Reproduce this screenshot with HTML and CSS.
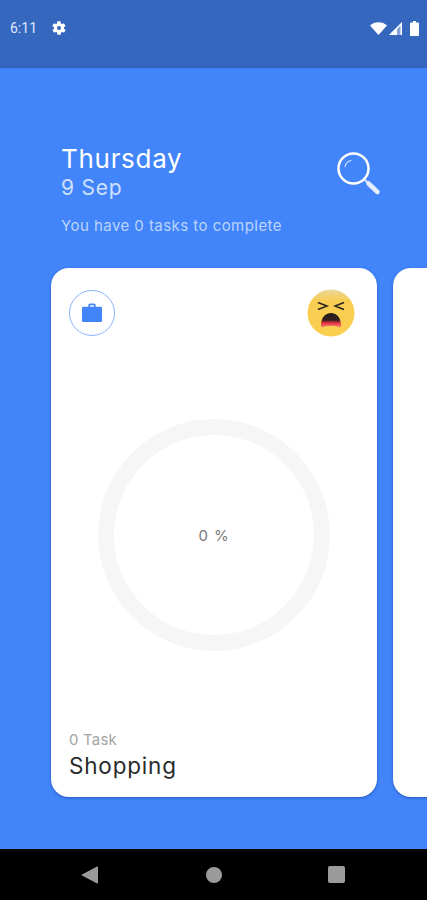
FILE: index.html
```html
<!DOCTYPE html>
<html lang="en">
<head>
  <meta charset="UTF-8" />
  <meta name="viewport" content="width=device-width, initial-scale=1.0" />
  <title>Tasks</title>
  <link rel="stylesheet" href="styles.css">
</head>
<body>
  <div class="status-bar">
    <div class="status-left">
      <span class="clock">6:11</span>
      <svg class="gear" width="16" height="16" viewBox="0 0 24 24"><path fill="#fff" d="M19.400 13c.1-.3.1-.7.1-1s0-.7-.1-1l2.100-1.600c.2-.2.2-.4.1-.6l-2-3.500c-.1-.2-.4-.3-.6-.2l-2.500 1c-.5-.4-1.100-.7-1.700-1l-.4-2.600c0-.3-.2-.5-.5-.5h-4c-.3 0-.5.2-.5.500l-.4 2.600c-.6.3-1.200.6-1.700 1l-2.500-1c-.2-.1-.5 0-.6.2l-2 3.500c-.1.2-.1.4.1.6L4.600 11c-.1.3-.1.700-.1 1s0 .7.1 1l-2.100 1.600c-.2.2-.2.4-.1.6l2 3.500c.1.2.4.3.6.2l2.500-1c.5.4 1.100.7 1.700 1l.4 2.600c0 .3.2.5.5.5h4c.3 0 .5-.2.5-.5l.4-2.600c.6-.3 1.200-.6 1.700-1l2.500 1c.2.1.5 0 .6-.2l2-3.500c.1-.2.1-.4-.1-.6L19.400 13zM12 15a3 3 0 1 1 0-6 3 3 0 0 1 0 6z"/></svg>
    </div>
    <div class="status-right">
      <svg width="17" height="13" viewBox="0 0 17 13"><path fill="#fff" d="M0 3.500C2.200 1.400 5.200.2 8.500.2s6.300 1.200 8.500 3.300L8.500 13z"/></svg>
      <svg width="13" height="13" viewBox="0 0 13 13"><path fill="#fff" opacity=".4" d="M13 0v13H0z"/><path fill="#fff" d="M8 5.500V13H0z"/><path fill="#fff" d="M13 0v13h-1.500V3.600L3 12l-1-.8z"/></svg>
      <svg class="battery" width="9" height="15" viewBox="0 0 9 15"><path fill="#fff" d="M3 0h3v1.500h2c.5 0 1 .5 1 1V14c0 .5-.5 1-1 1H1c-.5 0-1-.5-1-1V2.500c0-.5.5-1 1-1h2z"/></svg>
    </div>
  </div>

  <main class="main">
    <header class="header">
      <div class="heading">
        <h1 class="day">Thursday</h1>
        <div class="date">9 Sep</div>
        <p class="summary">You have 0 tasks to complete</p>
      </div>
      <svg class="search" width="46" height="46" viewBox="0 0 46 46">
        <circle cx="17.500" cy="17.500" r="15" fill="none" stroke="#fff" stroke-width="2.500"/>
        <path d="M9 15.500c.7-3 3-5.300 6-6" fill="none" stroke="#fff" stroke-opacity=".75" stroke-width="1.200" stroke-linecap="round"/>
        <path d="M28.500 28.500l3.500 3.500" stroke="#d5e3fb" stroke-width="2"/>
        <path d="M32.500 32.500l9 8.500" stroke="#e4edfd" stroke-width="4.500" stroke-linecap="round"/>
      </svg>
    </header>

    <div class="cards">
      <section class="card">
        <div class="card-top">
          <div class="cat-icon">
            <svg width="22" height="20" viewBox="0 0 24 22"><path fill="#4285fb" d="M8 4V2.500C8 1.400 8.900.5 10 .5h4c1.100 0 2 .9 2 2V4h5.500c.8 0 1.500.7 1.500 1.500v14c0 .8-.7 1.500-1.500 1.500h-19C1.700 21 1 20.300 1 19.500v-14C1 4.700 1.700 4 2.500 4zm2 0h4V2.500h-4z"/></svg>
          </div>
          <svg class="emoji" width="48" height="48" viewBox="0 0 48 48">
            <defs>
              <linearGradient id="face" x1="0" y1="0" x2="0" y2="1">
                <stop offset="0" stop-color="#e9d698"/>
                <stop offset=".25" stop-color="#f8cd52"/>
                <stop offset="1" stop-color="#fbcf4e"/>
              </linearGradient>
              <linearGradient id="mouth" x1="0" y1="0" x2="0" y2="1">
                <stop offset="0" stop-color="#26201f"/>
                <stop offset=".5" stop-color="#33201f"/>
                <stop offset=".7" stop-color="#e8303f"/>
                <stop offset="1" stop-color="#f0857b"/>
              </linearGradient>
            </defs>
            <circle cx="24" cy="24" r="23.500" fill="url(#face)"/>
            <path d="M11 13.500l9 3.500-9 3.500M37 13.500l-9 3.500 9 3.500" fill="none" stroke="#2b2420" stroke-width="1.500"/>
            <path d="M14 37c0-8 4-13 10-13s10 5 10 13c0 1-1 1.500-2 1-5-1.800-11-1.800-16 0-1 .5-2 0-2-1z" fill="url(#mouth)"/>
          </svg>
        </div>

        <div class="ring">
          <span class="percent">0 %</span>
        </div>

        <div class="card-bottom">
          <div class="count">0 Task</div>
          <div class="title">Shopping</div>
        </div>
      </section>
      <section class="card next"></section>
    </div>
  </main>

  <nav class="nav-bar">
    <svg width="18" height="18" viewBox="0 0 18 18"><path fill="#9b9b9b" d="M17 1v16c0 .5-.4.7-.8.4L1 9.500c-.4-.2-.4-.7 0-1L16.200.6c.4-.3.8 0 .8.400z"/></svg>
    <span class="nav-circle"></span>
    <span class="nav-square"></span>
  </nav>
</body>
</html>
```

FILE: styles.css
```css
* {
  box-sizing: border-box;
}

body {
  margin: 0;
  width: 427px;
  height: 900px;
  overflow: hidden;
  display: flex;
  flex-direction: column;
  font-family: Inter, "Open Sans", sans-serif;
  background: #4285fb;
}

.status-bar {
  height: 68px;
  flex: none;
  padding: 18px 8px 0 10px;
  display: flex;
  justify-content: space-between;
  align-items: flex-start;
  background: #3567bf;
  box-shadow: inset 0 -2px 1px -1px #3161b5;
}

.status-left {
  display: flex;
  align-items: center;
  gap: 14px;
  height: 20px;
}

.clock {
  font-family: Roboto, sans-serif;
  font-size: 14px;
  color: #dfe8f8;
}

.status-right {
  display: flex;
  align-items: center;
  gap: 2px;
  height: 20px;
}

.battery {
  margin-left: 6px;
}

.main {
  flex: 1;
  overflow: hidden;
}

.header {
  height: 200px;
  padding: 75px 45px 0 61px;
  display: flex;
  justify-content: space-between;
  align-items: flex-start;
}

.day {
  margin: 0;
  font-size: 26px;
  line-height: 32px;
  font-weight: 400;
  color: #fff;
  letter-spacing: 0.7px;
}

.date {
  font-size: 21px;
  line-height: 26px;
  color: #cfe0fd;
  letter-spacing: 0.8px;
}

.summary {
  margin: 15px 0 0;
  font-size: 15px;
  line-height: 20px;
  color: #bcd4fd;
  letter-spacing: 0.45px;
}

.search {
  margin-top: 8px;
}

.cards {
  display: flex;
  gap: 16px;
  padding-left: 51px;
}

.card {
  flex: none;
  width: 326px;
  height: 529px;
  padding: 20px 22px 17px 18px;
  display: flex;
  flex-direction: column;
  background: #fff;
  border-radius: 18px;
  box-shadow: 0 1px 3px rgba(20, 60, 140, 0.6);
}

.card-top {
  display: flex;
  justify-content: space-between;
  align-items: flex-start;
  height: 50px;
}

.cat-icon {
  width: 46px;
  height: 46px;
  margin-top: 2px;
  display: flex;
  align-items: center;
  justify-content: center;
  border: 1px solid #8cb3fb;
  border-radius: 50%;
}

.emoji {
  margin-top: 1px;
}

.ring {
  width: 232px;
  height: 232px;
  margin: 81px 0 0 29px;
  display: flex;
  align-items: center;
  justify-content: center;
  border: 16px solid #f6f6f6;
  border-radius: 50%;
}

.percent {
  font-size: 15px;
  color: #777;
  letter-spacing: 0.8px;
}

.card-bottom {
  margin-top: auto;
}

.count {
  font-size: 15px;
  line-height: 20px;
  color: #a3a3a3;
  letter-spacing: 0.2px;
}

.title {
  margin-top: 2px;
  font-size: 22.500px;
  line-height: 28px;
  color: #2a2a2a;
  letter-spacing: 0.8px;
}

.nav-bar {
  height: 51px;
  flex: none;
  padding: 0 82px 0 81px;
  display: flex;
  justify-content: space-between;
  align-items: center;
  background: #000;
}

.nav-circle {
  width: 16px;
  height: 16px;
  border-radius: 50%;
  background: #9b9b9b;
}

.nav-square {
  width: 17px;
  height: 17px;
  border-radius: 2px;
  background: #9b9b9b;
}
```
